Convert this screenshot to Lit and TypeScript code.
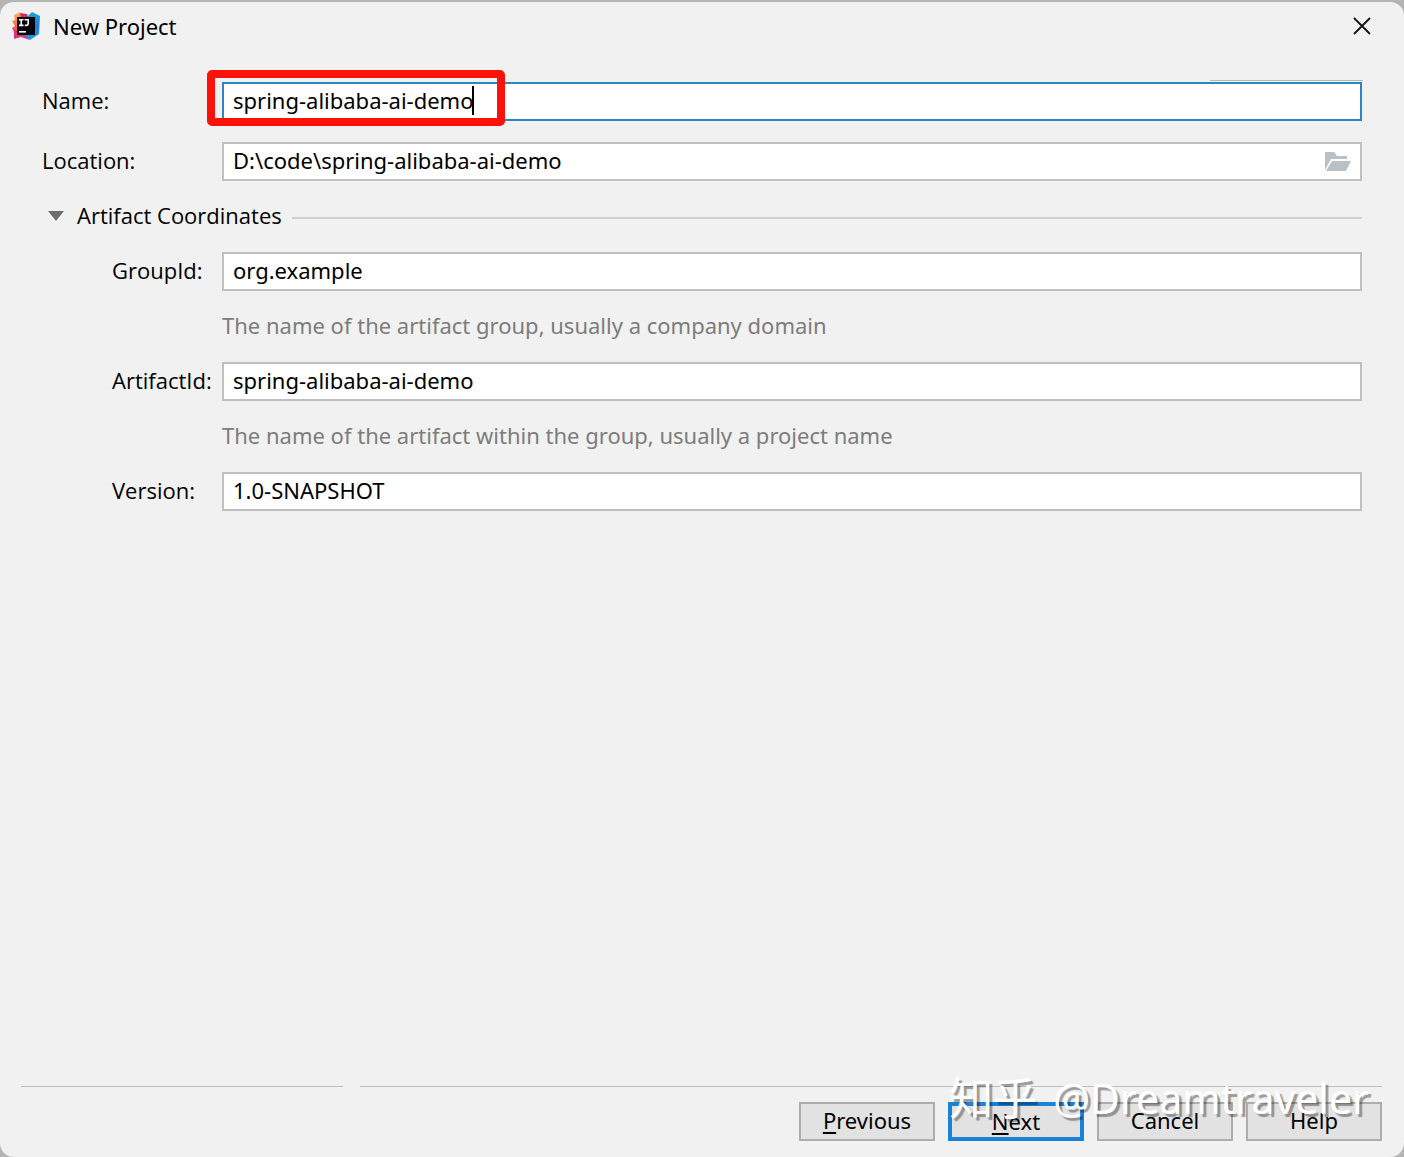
import { LitElement, html, css, svg } from "lit";
import { customElement, property, state } from "lit/decorators.js";

const logo = svg`
  <defs>
    <linearGradient id="warm" x1="0" y1="0" x2="0" y2="1">
      <stop offset="0" stop-color="#fdb85c" /><stop offset="0.5" stop-color="#fb7a3c" /><stop offset="1" stop-color="#e3307e" />
    </linearGradient>
    <linearGradient id="cool" x1="0" y1="0" x2="0" y2="1">
      <stop offset="0" stop-color="#12a9cf" /><stop offset="0.5" stop-color="#2a76dc" /><stop offset="1" stop-color="#16a0ee" />
    </linearGradient>
  </defs>
  <path fill="url(#warm)" d="M2 3 L8 0 L13 5 L10 22 L3 22 L0 16 L3 14 L0 9 L3 8 Z" />
  <path fill="#e02f80" d="M2 18 L12 21 L18 28 L9 25 L2 27 Z" />
  <path fill="#d8286a" d="M8 1 L15 2 L17 7 L9 7 Z" />
  <path fill="url(#cool)" d="M16 4 L20 0 L28 4 L27 22 L18 28 L11 22 L16 7 Z" />
  <rect x="5" y="5" width="18" height="18" fill="#080308" />
  <path fill="none" stroke="#fff" stroke-width="1.6" d="M7 7.800h4.500M9.200 7.800v5.400M7 13.400h4.500M12.600 7.800h3.600v4q0 1.600-1.600 1.600h-1.800" />
  <rect x="7" y="19" width="7" height="1.600" fill="#fff" />
`;

@customElement("form-field")
export class FormField extends LitElement {
  static styles = css`
    :host { display: block; }
    .row { display: grid; grid-template-columns: var(--label-width) 1fr; align-items: center; }
    label { padding-bottom: 4px; font-family: "Open Sans", "Noto Sans", sans-serif; white-space: nowrap; }
    .box { display: flex; align-items: center; height: 39px; background: #fff; border: 2px solid #c0c0c0; }
    .box:focus-within, .box.active { border-color: #2d86c4; }
    input { flex: 1; min-width: 0; height: 100%; padding: 0 9px 4px; border: 0; outline: 0; background: none; color: #000; font: inherit; }
    .box, .row, input { box-sizing: border-box; }
    .hint { margin: 0; padding: 20px 0 23px var(--label-width); line-height: 28px; color: #7c7c7c; }
    button { display: flex; padding: 0 8px; border: 0; background: none; }
    svg { display: block; }
  `;
  @property() label = "";
  @property() value = "";
  @property() hint = "";
  @property({ type: Boolean }) active = false;
  @property({ type: Boolean }) browse = false;

  render() {
    return html`
      <div class="row">
        <label for="field">${this.label}</label>
        <div class="box ${this.active ? "active" : ""}">
          <input id="field" type="text" .value=${this.value} spellcheck="false" />
          ${this.browse
            ? html`<button type="button" aria-label="Browse">
                <svg width="28" height="22" viewBox="0 0 28 22" fill="#bac1c6">
                  <path d="M1 1h9l3 4h10v3H7L1 19z" />
                  <path d="M8 10h19l-5 10H2z" />
                </svg>
              </button>`
            : ""}
        </div>
      </div>
      ${this.hint ? html`<p class="hint">${this.hint}</p>` : ""}
    `;
  }
}

@customElement("app-root")
export class AppRoot extends LitElement {
  static styles = css`
    :host { display: block; color: #000; font: 22px/30px "Noto Sans", "Open Sans", "Noto Sans CJK SC", sans-serif; }
    * { box-sizing: border-box; }
    .desktop { min-height: 100vh; display: flex; padding-top: 1px; background: #b4b4b4; }
    .window { position: relative; flex: 1; display: flex; flex-direction: column; background: #f1f1f1; border-top: 1px solid #b4b4b4; border-radius: 14px; }
    header { display: flex; align-items: center; gap: 13px; height: 48px; padding: 0 32px 0 12px; }
    h1 { flex: 1; margin: 0; font: inherit; }
    header svg { display: block; }
    .close { display: flex; padding: 0; border: 0; background: none; }
    main { flex: 1; padding: 32px 42px 0; }
    .basics { --label-width: 180px; display: grid; gap: 21px; }
    .name { position: relative; }
    .marker { position: absolute; left: 165px; top: -12px; width: 298px; height: 56px; border: 8px solid #fb1208; border-radius: 5px; pointer-events: none; }
    .caret { position: absolute; left: 430px; top: 4px; width: 2px; height: 29px; background: #000; }
    .rule { position: absolute; right: -1px; top: -2px; width: 153px; height: 1px; background: #b8b8b8; }
    .section { display: flex; align-items: center; gap: 10px; width: 100%; height: 30px; margin: 20px 0 21px; padding: 0 0 0 6px; border: 0; background: none; color: inherit; font: inherit; font-family: "Open Sans", "Noto Sans", sans-serif; }
    .section::after { content: ""; flex: 1; height: 2px; margin-top: 3px; background: #cfcfcf; }
    .section svg { margin-right: 3px; }
    .section span { padding-bottom: 2px; }
    .coords { --label-width: 110px; padding-left: 70px; }
    footer { display: grid; grid-template-columns: 322px 1fr; column-gap: 17px; row-gap: 15px; padding: 0 22px 16px 21px; }
    .line { height: 1px; background: #bdbdbd; }
    .buttons { grid-column: 1 / -1; display: flex; justify-content: flex-end; gap: 13px; }
    .buttons button { width: 136px; height: 39px; padding: 0 0 4px; border: 2px solid #adadad; background: #e2e2e2; color: #000; font: inherit; line-height: 30px; }
    .buttons .primary { border: 4px solid #1883d7; }
    u { text-decoration-thickness: 2px; text-underline-offset: 3px; }
    .watermark { position: absolute; right: 35px; bottom: 31px; display: flex; align-items: center; gap: 16px; color: #fff; font-size: 41px; line-height: 56px; white-space: nowrap; text-shadow: 3px 3px 1px #0000005c; pointer-events: none; }
    .site { font-size: 44px; }
  `;
  @state() private open = true;

  render() {
    return html`
      <div class="desktop">
        <div class="window">
          <header>
            <svg width="28" height="28" viewBox="0 0 28 28">${logo}</svg>
            <h1>New Project</h1>
            <button class="close" type="button" aria-label="Close">
              <svg width="20" height="20" viewBox="0 0 20 20" fill="none" stroke="#111" stroke-width="1.800"><path d="M2 2 18 18M18 2 2 18" /></svg>
            </button>
          </header>
          <main>
            <div class="basics">
              <div class="name">
                <form-field label="Name:" value="spring-alibaba-ai-demo" active></form-field>
                <span class="rule"></span><span class="caret"></span><span class="marker"></span>
              </div>
              <form-field label="Location:" value="D:\\code\\spring-alibaba-ai-demo" browse></form-field>
            </div>
            <button class="section" type="button" aria-expanded=${this.open} @click=${() => (this.open = !this.open)}>
              <svg width="16" height="10" viewBox="0 0 16 10"><path fill="#6e6e6e" d="M0 0h16L8 10z" /></svg>
              <span>Artifact Coordinates</span>
            </button>
            ${this.open
              ? html`<div class="coords">
                  <form-field label="GroupId:" value="org.example" hint="The name of the artifact group, usually a company domain"></form-field>
                  <form-field label="ArtifactId:" value="spring-alibaba-ai-demo" hint="The name of the artifact within the group, usually a project name"></form-field>
                  <form-field label="Version:" value="1.0-SNAPSHOT"></form-field>
                </div>`
              : ""}
          </main>
          <footer>
            <div class="line"></div>
            <div class="line"></div>
            <div class="buttons">
              <button type="button"><u>P</u>revious</button>
              <button type="button" class="primary"><u>N</u>ext</button>
              <button type="button">Cancel</button>
              <button type="button">Help</button>
            </div>
          </footer>
          <div class="watermark"><span class="site">知乎</span><span>@Dreamtraveler</span></div>
        </div>
      </div>
    `;
  }
}
